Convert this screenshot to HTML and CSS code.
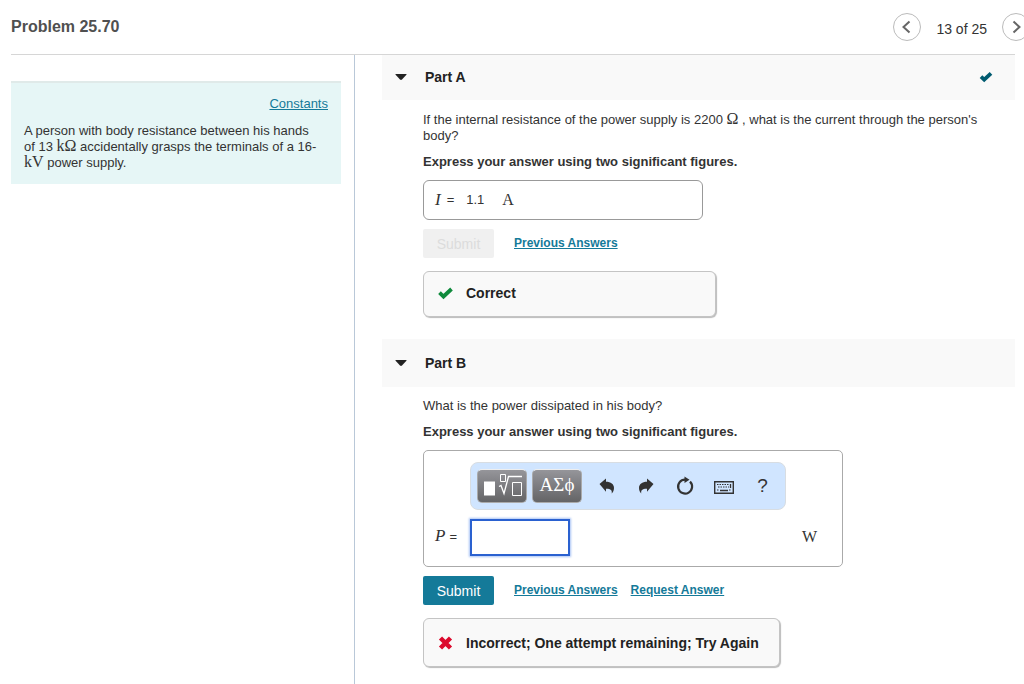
FILE: index.html
```html
<!DOCTYPE html>
<html lang="en">
<head>
<meta charset="utf-8">
<title>Problem 25.70</title>
<link rel="stylesheet" href="styles.css">
</head>
<body>
<div class="page">
  <header class="topbar">
    <h1 class="title">Problem 25.70</h1>
    <nav class="pager" aria-label="Problems">
      <button class="round" type="button" aria-label="Previous problem"><svg width="26" height="26" viewBox="0 0 26 26"><path d="M15.500 7.500 9.500 13l6 5.500"/></svg></button>
      <span class="count">13 of 25</span>
      <button class="round" type="button" aria-label="Next problem"><svg width="26" height="26" viewBox="0 0 26 26"><path d="M10.500 7.500 16.500 13l-6 5.500"/></svg></button>
    </nav>
  </header>
  <div class="columns">
    <aside class="side">
      <div class="statement">
        <a class="constants" href="#constants">Constants</a>
        <p class="text">A person with body resistance between his hands of 13 <span class="math">kΩ</span> accidentally grasps the terminals of a 16-<span class="math">kV</span> power supply.</p>
      </div>
    </aside>
    <main class="main">
      <section class="part">
        <header class="part-head">
          <svg class="caret" width="12" height="6" viewBox="0 0 12 6"><path d="M1 0h10q1 0 .4.800L7 5.500q-1 .8-2 0L.6.800Q0 0 1 0z"/></svg>
          <h2 class="part-title">Part A</h2>
          <svg class="done" width="14" height="12" viewBox="0 0 14 12"><path d="M2 5.600 5.200 8.600 12 2.300"/></svg>
        </header>
        <div class="part-body">
          <p class="text">If the internal resistance of the power supply is 2200 <span class="math">Ω</span> , what is the current through the person's body?</p>
          <p class="text strong">Express your answer using two significant figures.</p>
          <div class="result"><span class="math var">I</span><span class="eq">=</span><span class="value">1.1</span><span class="math">A</span></div>
          <div class="actions">
            <button class="submit" type="button" disabled>Submit</button>
            <a class="action" href="#previous-a">Previous Answers</a>
          </div>
          <div class="feedback correct">
            <svg class="tick" width="15" height="13" viewBox="0 0 15 13"><path d="M1.500 5.600 5.500 9.500 13.500 2"/></svg>
            <span>Correct</span>
          </div>
        </div>
      </section>
      <section class="part">
        <header class="part-head tall">
          <svg class="caret" width="12" height="6" viewBox="0 0 12 6"><path d="M1 0h10q1 0 .4.800L7 5.500q-1 .8-2 0L.6.800Q0 0 1 0z"/></svg>
          <h2 class="part-title">Part B</h2>
        </header>
        <div class="part-body">
          <p class="text">What is the power dissipated in his body?</p>
          <p class="text strong">Express your answer using two significant figures.</p>
          <div class="editor">
            <div class="toolbar" role="toolbar" aria-label="Math tools">
              <button class="key" type="button" aria-label="Templates">
                <svg width="40" height="26" viewBox="0 0 40 26" fill="none" stroke="#fff"><path d="M2 8.500h11v14H2z" fill="#fff" stroke="none"/><path d="M18.500 1.500h5v7h-5zM30.500 9.500h9v13h-9z"/><path d="M17 13.500l2-1 3 8 4.500-17H40" stroke-width="1.300"/></svg>
              </button>
              <button class="key greek" type="button">ΑΣϕ</button>
              <button class="tool" type="button" aria-label="Undo"><svg width="16" height="16" viewBox="0 0 16 16"><path d="M.5 5.900 7 .5v3.300c4.800 0 8 2.500 8 6.200 0 2.500-1 4.300-2.300 5.500.6-3.500-1-4.900-5.700-4.800v3z"/></svg></button>
              <button class="tool" type="button" aria-label="Redo"><svg width="16" height="16" viewBox="0 0 16 16"><path d="M15.500 5.900 9 .5v3.300c-4.800 0-8 2.500-8 6.200 0 2.500 1 4.300 2.300 5.500-.6-3.500 1-4.900 5.700-4.800v3z"/></svg></button>
              <button class="tool" type="button" aria-label="Reset"><svg width="18" height="20" viewBox="0 0 18 20"><path d="M14 5.600a7 7 0 1 1-5-2" fill="none" stroke="#333" stroke-width="2.200"/><path d="M8.500.5l5 3.300-5 3.300z"/></svg></button>
              <button class="tool low" type="button" aria-label="Keyboard"><svg width="20" height="13" viewBox="0 0 20 13"><path d="M.7.700h18.600v11.600H.7z" fill="none" stroke="#333" stroke-width="1.400"/><path d="M3 3.500h12M4 6h11M3 9h2M15 9h2" fill="none" stroke="#333" stroke-width="1.200" stroke-dasharray="1.500 1"/><path d="M6 9.500h8M16.500 3v4" stroke="#333" stroke-width="1.300"/></svg></button>
              <button class="tool help" type="button" aria-label="Help">?</button>
            </div>
            <label class="label" for="power"><span class="math var">P</span><span class="eq">=</span></label>
            <input class="field" id="power" type="text">
            <span class="math unit">W</span>
          </div>
          <div class="actions">
            <button class="submit" type="button">Submit</button>
            <a class="action" href="#previous-b">Previous Answers</a>
            <a class="action near" href="#request">Request Answer</a>
          </div>
          <div class="feedback incorrect">
            <svg class="cross" width="15" height="16" viewBox="0 0 15 16"><path d="M2.500 3l10 10M12.500 3l-10 10"/></svg>
            <span>Incorrect; One attempt remaining; Try Again</span>
          </div>
        </div>
      </section>
    </main>
  </div>
</div>
</body>
</html>
```
FILE: styles.css
```css
* { box-sizing: border-box; }
body {
  margin: 0;
  overflow: hidden;
  background: #fff;
  color: #333;
  font: 13px/16px "Liberation Sans", Arial, sans-serif;
}
h1, h2, p { margin: 0; }
button { font-family: inherit; padding: 0; cursor: pointer; }
svg { display: block; flex: none; }

.page { display: flex; flex-direction: column; min-height: 100vh; padding: 0 9px 0 11px; }
.topbar {
  display: flex;
  align-items: center;
  justify-content: space-between;
  height: 55px;
  border-bottom: 1px solid #d6d6d6;
}
.title { color: #505050; font-size: 16px; line-height: 20px; }
.pager { display: flex; align-items: center; gap: 15px; margin-right: -15px; }
.count { font-size: 14px; padding-top: 3px; }
.round {
  display: block;
  width: 28px;
  height: 28px;
  border: 1px solid #bbb;
  border-radius: 50%;
  background: #fff;
}
.round path { fill: none; stroke: #666; stroke-width: 2; }

.columns { display: flex; flex: 1; }
.side { flex: 0 0 344px; padding: 26px 13px 0 0; border-right: 1px solid #b9c8d8; }
.statement { padding: 13px; border-top: 2px solid #e0eae9; background: #e6f6f6; }
.statement .text { padding-right: 7px; }
.constants { display: block; margin-bottom: 11px; text-align: right; }
a { color: #147a99; }
.math { font: 16px/16px "Liberation Serif", "Times New Roman", serif; }
.text .math { line-height: 8px; }
.var { font-style: italic; font-size: 17px; }

.main { flex: 1; min-width: 0; padding-left: 27px; }
.part-head { display: flex; align-items: center; height: 45px; padding: 0 22px 2px 13px; background: #f9f9f9; }
.part-head.tall { height: 48px; padding-bottom: 0; }
.caret { fill: #222; }
.part-title { flex: 1; margin-left: 18px; color: #222; font-size: 14px; line-height: 16px; }
.done, .tick { fill: none; stroke: #005b70; stroke-width: 3.800; }
.tick { stroke: #0f8a3c; }
.part-body { padding: 12px 20px 22px 41px; }
.tall + .part-body { padding-top: 11px; }
.strong { margin: 10px 0; font-weight: bold; }

.result {
  display: flex;
  align-items: center;
  width: 280px;
  height: 40px;
  padding: 0 11px 1px;
  border: 1px solid #999;
  border-radius: 6px;
}
.eq { margin-left: 6px; font-size: 13px; }
.value { margin: 0 18px 0 12px; }
.actions { display: flex; align-items: center; margin: 9px 0 13px; }
.submit {
  width: 71px;
  height: 29px;
  border: 0;
  border-radius: 2px;
  background: #147a99;
  color: #fff;
  font-size: 14px;
}
.submit:disabled { background: #f0f0f0; color: #dcdcdc; }
.action { margin-left: 20px; padding-bottom: 2px; font-size: 12px; font-weight: bold; }
.near { margin-left: 13px; }

.feedback {
  display: flex;
  align-items: center;
  width: 293px;
  height: 46px;
  padding: 0 0 2px 14px;
  border: 1px solid #c4c4c4;
  border-radius: 6px;
  background: #f9f9f9;
  box-shadow: 1px 1px 1px #bbb;
  color: #222;
  font-size: 14px;
  font-weight: bold;
  gap: 13px;
}
.incorrect { width: 357px; height: 49px; padding-bottom: 0; }
.cross { fill: none; stroke: #dc0a2d; stroke-width: 4.500; }

.editor {
  display: grid;
  grid-template-columns: 35px 316px 1fr;
  align-items: center;
  width: 420px;
  padding: 11px 11px 10px;
  border: 1px solid #aaa;
  border-radius: 5px;
  row-gap: 9px;
}
.toolbar {
  grid-column: 2;
  display: flex;
  align-items: center;
  height: 48px;
  padding: 0 3px 0 6px;
  border: 1px solid #d8dde2;
  border-radius: 8px;
  background: #d0e5ff;
}
.key {
  display: grid;
  place-items: center;
  flex: none;
  width: 50px;
  height: 34px;
  margin-right: 5px;
  border: 1px solid #aaa;
  border-top-color: #eee;
  border-radius: 5px;
  background: linear-gradient(#95959a, #646466);
  color: #fff;
}
.greek { padding-bottom: 3px; font: 19px/24px "Liberation Serif", "Times New Roman", serif; }
.tool { display: grid; place-items: center; width: 39px; height: 34px; border: 0; background: none; color: #333; }
.tool svg { fill: #333; }
.low { padding-top: 3px; }
.help { font-size: 19px; }
.label { grid-column: 1; padding-bottom: 2px; white-space: nowrap; }
.label .eq { margin-left: 4px; }
.field {
  width: 100px;
  height: 37px;
  border: 2px solid #2a61d0;
  background: #fff;
  box-shadow: 0 0 2px 1px #a9c4f5;
  font: inherit;
  outline: 0;
}
.unit { justify-self: end; margin-right: 14px; padding-bottom: 2px; }
```
